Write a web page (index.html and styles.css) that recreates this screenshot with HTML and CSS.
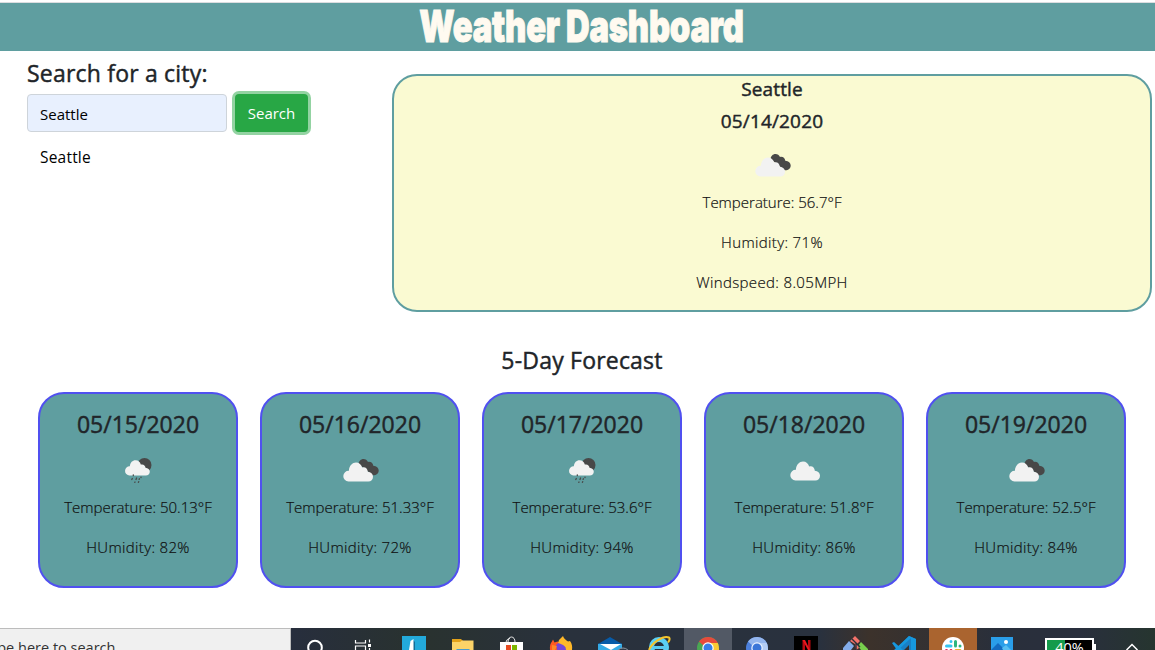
FILE: index.html
```html
<!DOCTYPE html>
<html lang="en">
<head>
<meta charset="utf-8">
<title>Weather Dashboard</title>
<link rel="stylesheet" href="styles.css">
</head>
<body>
<svg class="defs" width="0" height="0" aria-hidden="true">
  <symbol id="cloud" viewBox="0 0 30 20"><path fill="#f2f2f2" d="M5.500 19.500a5.300 5.300 0 0 1 .4-10.800C6.200 3.500 9.500.500 13 .500c3.200 0 5.300 2 6.200 5 3-1 5.500 1.300 5.600 4.200 3 .1 5.200 2.300 5.200 5 0 2.800-2 4.800-4.700 4.800z"/></symbol>
  <symbol id="broken" viewBox="0 0 36 23">
    <path fill="#484848" d="M15.500 5c.3-2.800 2.300-5 5-5 2.100 0 3.600 1 4.500 2.900 2.700-.6 4.800 1 5.300 3.800 3.300.2 5.400 2.200 5.400 4.900 0 3.100-2.400 4.900-6 4.700z"/>
    <path fill="#f2f2f2" d="M5.500 22.500a5.300 5.300 0 0 1 .4-10.800C6.200 6.500 9.500 3.500 13 3.500c3.200 0 5.300 2 6.200 5 3-1 5.500 1.300 5.600 4.200 3 .1 5.200 2.300 5.200 5 0 2.800-2 4.800-4.700 4.800z"/>
  </symbol>
  <symbol id="rain" viewBox="0 0 27 26">
    <circle cx="19.500" cy="7" r="7" fill="#484848"/>
    <path fill="#f2f2f2" d="M4.500 17.500a4.600 4.600 0 0 1 .3-9.200C5.200 4.500 7.500 2.300 10.500 2.300c2.900 0 4.700 1.700 5.300 4.300 2.600-.7 4.500.9 4.700 3.200 2.500.2 4.300 1.700 4.300 4 0 2.300-1.700 3.700-4 3.700z"/>
    <g stroke="#484848" stroke-width="1.300" stroke-linecap="round"><path d="M8.300 16.800v.7M7.300 20.500l-.5 1M11.600 20l-.6 1.500M16 19.200v.4M10 24l-.2.400M14.400 20.800l-.3.600M13.700 23.700l-.3.600"/></g>
  </symbol>
</svg>

<header class="banner"><h1>Weather Dashboard</h1></header>

<main>
  <div class="top">
    <section class="search">
      <h2>Search for a city:</h2>
      <form class="search-row">
        <input class="city" type="text" value="Seattle" aria-label="City">
        <button class="go" type="button">Search</button>
      </form>
      <div class="history">Seattle</div>
    </section>
    <section class="current">
      <h3>Seattle</h3>
      <h3>05/14/2020</h3>
      <div class="icon"><svg width="36" height="23"><use href="#broken"/></svg></div>
      <p>Temperature: 56.7°F</p>
      <p class="wide">Humidity: 71%</p>
      <p class="wide">Windspeed: 8.05MPH</p>
    </section>
  </div>

  <h2 class="forecast-title">5-Day Forecast</h2>
  <section class="forecast">
    <article class="day"><h4>05/15/2020</h4><div class="icon"><svg width="27" height="26"><use href="#rain"/></svg></div><p>Temperature: 50.13°F</p><p class="wide">HUmidity: 82%</p></article>
    <article class="day"><h4>05/16/2020</h4><div class="icon"><svg width="36" height="23"><use href="#broken"/></svg></div><p>Temperature: 51.33°F</p><p class="wide">HUmidity: 72%</p></article>
    <article class="day"><h4>05/17/2020</h4><div class="icon"><svg width="27" height="26"><use href="#rain"/></svg></div><p>Temperature: 53.6°F</p><p class="wide">HUmidity: 94%</p></article>
    <article class="day"><h4>05/18/2020</h4><div class="icon"><svg width="30" height="20"><use href="#cloud"/></svg></div><p>Temperature: 51.8°F</p><p class="wide">HUmidity: 86%</p></article>
    <article class="day"><h4>05/19/2020</h4><div class="icon"><svg width="36" height="23"><use href="#broken"/></svg></div><p>Temperature: 52.5°F</p><p class="wide">HUmidity: 84%</p></article>
  </section>
</main>

<footer class="taskbar">
  <div class="task-search"><span>Type here to search</span></div>
  <div class="apps">
    <svg class="app"><circle cx="23" cy="19.500" r="6.800" fill="none" stroke="#fff" stroke-width="2"/></svg>
    <svg class="app"><g fill="none" stroke="#fff" stroke-width="1.200"><path d="M14.500 12v3h10v-3M14.500 22v-4h10v4M28.500 11.500v3M28.500 20v2"/></g><path fill="#fff" d="M27 16h3v3h-3z"/></svg>
    <svg class="app"><path fill="#23aadb" d="M12 8h24v14H12z"/><path fill="#136d98" d="M23 12l2 2v8h-2z"/><path fill="#fff" d="M19 22l1.500-9 3-2v11z"/></svg>
    <svg class="app"><path fill="#e3a21a" d="M13 11h9l2 2v4H13z"/><path fill="#fbd368" d="M13 14h8l2-1.500h11.500V22H13z"/><path fill="#4b9ccd" d="M17 22l1-1h12l1 1z"/></svg>
    <svg class="app"><path d="M20 14c0-3 1.500-5 3.500-5s3.500 2 3.500 5M18 15c0-3 2-4.500 4-4.500" fill="none" stroke="#e8e8e8"/><path fill="#fff" d="M12 14h23v8H12z"/><path fill="#e94c22" d="M18 17h5v5h-5z"/><path fill="#7db700" d="M24 17h5v5h-5z"/></svg>
    <svg class="app"><path fill="#ff5a24" d="M13 22c-.5-4 .5-7 2-8.500l1-2 1.500 3 3-1 4 3v5.500z"/><path fill="#7546d8" d="M20 22l-1-5 3-2.500 5 1.500 3 6z"/><path fill="#ffb829" d="M21 15l1-3 4-4c1 3 3 4 5 5.500l2-.5c2 3 2.500 5 2 9h-6c0-4-3-5-5-6z"/><path fill="#ff8a28" d="M15 17l5 1-2 4h-3z"/></svg>
    <svg class="app"><path fill="#35aae5" d="M12 16l12-4 12 4v6H12z"/><path fill="#075ba8" d="M12 16l12-7 12 7z"/><path fill="#fff" d="M14 16h21l-10 6z"/><circle cx="37" cy="27" r="7" fill="#303947" stroke="#8c959e"/></svg>
    <svg class="app"><circle cx="24" cy="19" r="7.500" fill="none" stroke="#5bd0f5" stroke-width="5"/><path fill="#58caf1" d="M18 18h14v3H18z"/><path d="M14 22c3-7 14-15 20-12.500 1 1 .5 3-1 5" fill="none" stroke="#f5c52c" stroke-width="2"/></svg>
    <svg class="app active"><circle cx="24" cy="20" r="11" fill="#4aa653"/><path fill="#fbc934" d="M24 15h9.800c1 2 1.200 4 1.200 7H24z"/><path fill="#e64a3c" d="M15 13.500A11 11 0 0 1 33.800 15H24l-4 3z"/><circle cx="24" cy="20" r="5.700" fill="#fff"/><circle cx="24" cy="20" r="4.500" fill="#377ee9"/></svg>
    <svg class="app"><circle cx="24" cy="20" r="11" fill="#4b7fdb"/><path fill="#94b6ee" d="M15 13.500A11 11 0 0 1 33.800 15H24l-4 3z"/><path fill="#b4cdf4" d="M24 15h9.800c1 2 1.200 4 1.200 7H24z"/><circle cx="24" cy="20" r="5.700" fill="#eef4ff"/><circle cx="24" cy="20" r="4.500" fill="#3b76d8"/></svg>
    <svg class="app"><path fill="#000" d="M12 8h24v14H12z"/><path fill="#b80911" d="M20.500 12H23v10h-2.500zM26 12h2.500v10H26z"/><path fill="#eb1720" d="M20.500 12H23l5 10h-2z"/></svg>
    <svg class="app"><path fill="#f4726a" d="M24 8l5 5-3 3 2 4-3 2-1-6-5-3z"/><path fill="#84adea" d="M18 13l5 5-3 4h-8v-2z"/><path fill="#78cf4d" d="M30 14l7 7v1h-7l-3-4z"/><path d="M21 11l4 4v7M25 15l4 4" stroke="#29303a" stroke-width="1.400" fill="none"/></svg>
    <svg class="app"><path fill="#1980c5" d="M29 8l7 3v11h-7v-5l-5 5h-9z"/><path fill="#1698df" d="M12 15l2-1 9 8h-6zM29 8l7 3v11h-5V10L18 22h-4z"/></svg>
    <svg class="app slack"><circle cx="24" cy="20" r="11" fill="#fff"/><g stroke-width="3" stroke-linecap="round"><path stroke="#36c5f0" d="M22 13.500v0M17.500 18h4.500"/><path stroke="#2eb67d" d="M26.500 13.500v4.500M31 18v0"/><path stroke="#e01e5a" d="M17.500 22.500v0M22 22.500v2"/><path stroke="#ecb22e" d="M27 22.500h4"/></g></svg>
    <svg class="app"><path fill="#2a9ee9" d="M13 9h22v13H13z"/><path fill="#136bc0" d="M13 22l7-7 7 7z"/><path fill="#57bdf2" d="M24 20l4-3 5 5h-8z"/><circle cx="28" cy="14" r="2" fill="#fff"/></svg>
  </div>
  <div class="battery"><span>40%</span></div>
  <div class="battery-tip"></div>
  <svg class="caret" width="16" height="22"><path d="M2.500 22L8 16.500l5.500 5.500" fill="none" stroke="#fff" stroke-width="1.500"/></svg>
</footer>
</body>
</html>
```
FILE: styles.css
```css
* { box-sizing: border-box; }
body { margin: 0; height: 650px; overflow: hidden; display: flex; flex-direction: column; background: #fff; color: #212529; font: 400 15px/24px "Open Sans", "Noto Sans", sans-serif; }
h1, h2, h3, h4, p { margin: 0; }
.defs { position: absolute; }
.banner { border-top: 1px solid #dcdde0; margin-top: 2px; height: 49px; background: #5f9ea0; display: flex; justify-content: center; padding-left: 8px; flex: none; }
.banner h1 { font: 900 43.500px/46px Inter, "Open Sans", sans-serif; color: #fffaf0; white-space: nowrap; transform: scaleX(.753); -webkit-text-stroke: 1px #fffaf0; letter-spacing: -.3px; }
main { flex: 1; min-height: 0; }
.top { display: flex; height: 261px; }
.search { width: 392px; padding: 8px 0 0 27px; }
h2 { font-size: 23px; font-weight: 500; line-height: 29px; letter-spacing: .2px; }
h2, h3, h4 { -webkit-text-stroke: .45px #212529; }
.search-row { display: flex; gap: 8px; margin-top: 6px; }
.city { width: 200px; height: 38px; border: 1px solid #ced4da; border-radius: 4px; padding: 1px 12px 0; background: #e8f0fe; font: inherit; color: #000; }
.go { width: 73px; height: 38px; border: 0; border-radius: 4px; background: #28a745; color: #fff; font: inherit; padding: 0; box-shadow: 0 0 0 3px #93d3a2; }
.history { color: #000; padding: 13px 0 0 13px; font-size: 15.500px; letter-spacing: .2px; }
.current { width: 760px; height: 238px; margin-top: 23px; border: 2px solid #5f9ea0; border-radius: 25px; background: #fafad2; text-align: center; }
.current h3 { font-size: 19px; line-height: 24px; font-weight: 500; margin-bottom: 8px; letter-spacing: .15px; }
.current h3:first-child { margin-top: 1px; }
.icon { display: flex; justify-content: center; align-items: center; height: 49px; padding-left: 1px; }
.icon svg { display: block; }
.current p, .day p { font-weight: 300; margin-bottom: 16px; color: #111; -webkit-text-stroke: .2px #111; }
p.wide { letter-spacing: .35px; }
.forecast-title { text-align: center; margin-top: 34px; padding-left: 9px; }
.forecast { display: flex; gap: 22px; padding: 17px 0 0 38px; }
.day { width: 200px; height: 196px; border: 2px solid #5050f0; border-radius: 26px; background: #5f9ea0; text-align: center; padding-top: 16px; }
.day h4 { font-size: 23px; line-height: 29px; font-weight: 500; margin-bottom: 7px; }
.taskbar { flex: none; height: 22px; overflow: hidden; display: flex; background: linear-gradient(90deg, #272e3d 0 291px, #29322f 420px, #29313c 560px, #29313e 820px, #3c322b 870px, #292f3b 1000px, #292f3d 1080px, #26352f 1155px); }
.task-search { width: 291px; height: 22px; background: #f0f0f0; border: 1px solid #bcbcbc; border-width: 1px 1px 0 0; overflow: hidden; white-space: nowrap; color: #333; font-size: 14.500px; padding-top: 7px; margin-right: 1px; }
.task-search span { margin-left: -18px; }
.apps { display: flex; gap: 1px; }
.app { display: block; width: 48px; height: 22px; }
.active { background: #525965; }
.slack { background: #aa642f; }
.battery { width: 49px; height: 22px; margin: 10px 0 0 19px; border: 2px solid #fff; background: linear-gradient(90deg, #149b4b 18px, #000 18px); color: #fff; font-size: 14.500px; line-height: 16px; text-align: center; }
.battery-tip { width: 2px; height: 6px; margin-top: 16px; background: #fff; }
.caret { margin-left: 28px; }
```
